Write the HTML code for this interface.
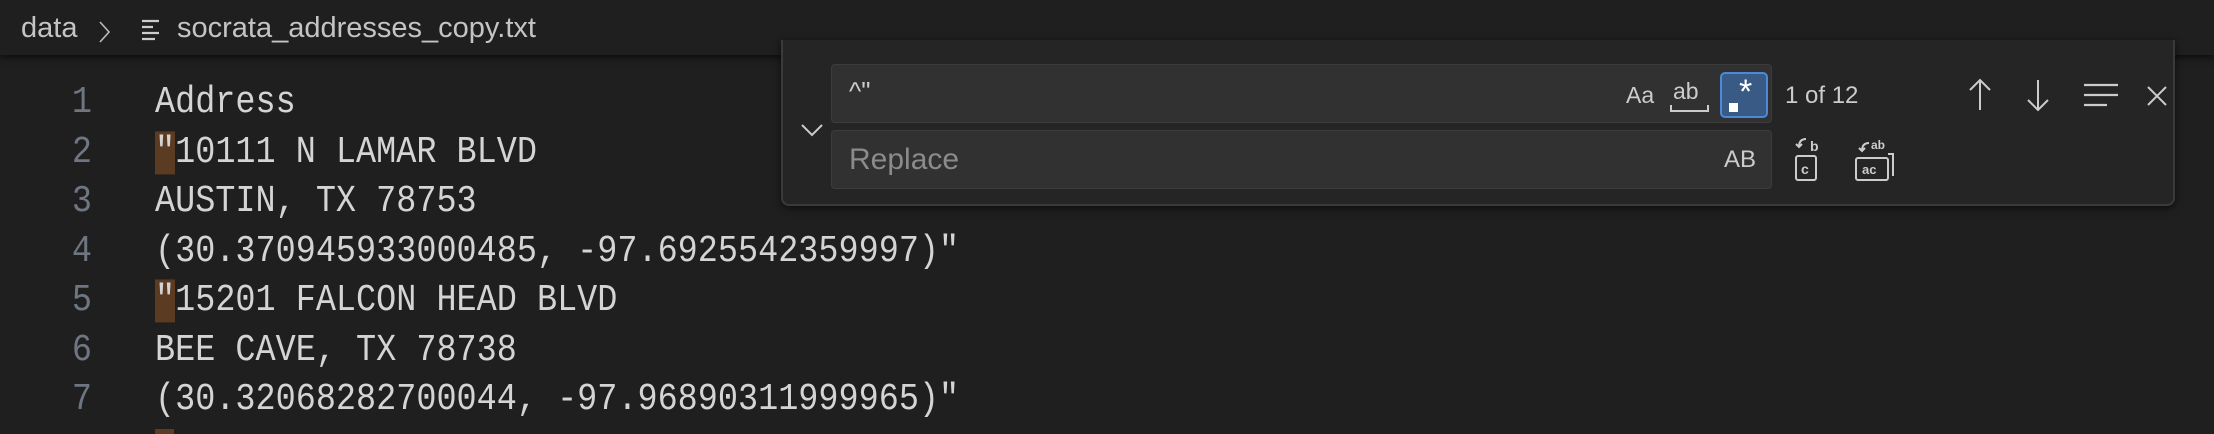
<!DOCTYPE html>
<html style="width:2214px;height:434px;overflow:hidden"><head><meta charset="utf-8"><style>
*{margin:0;padding:0;box-sizing:border-box}
body{width:2214px;height:434px;background:#1f1f1f;overflow:hidden;position:relative;font-family:"Liberation Sans",sans-serif;color:#cccccc}
.bc{position:absolute;left:0;top:0;width:2214px;height:55px;background:#1f1f1f;box-shadow:0 3px 6px rgba(0,0,0,.55);z-index:2}
.bc span{position:absolute;top:14px;font-size:29px;line-height:29px;color:#c4c4c4}
.code{position:absolute;left:0;top:79px;font-family:"Liberation Mono",monospace;font-size:33.5px}
.num{position:absolute;left:60px;width:32px;text-align:right;color:#6e7681;height:49.5px;line-height:49.5px;transform:scaleY(1.13)}
.t{position:absolute;left:155px;color:#d4d4d4;white-space:pre;height:49.5px;line-height:49.5px;transform:scaleY(1.13);transform-origin:0 50%}
.hl{background:#5c3b23}
.fw{position:absolute;left:781px;top:40px;width:1394px;height:166px;background:#252526;border:2px solid #3a3a3a;border-top:none;border-radius:0 0 8px 8px;box-shadow:0 2px 8px rgba(0,0,0,.6);z-index:3}
.in{position:absolute;background:#313131;border:1px solid #3c3c3c;border-radius:4px}
.ui{position:absolute;font-size:24px;color:#cccccc}
</style></head><body>
<div class="bc">
<span style="left:21px">data</span>
<svg style="position:absolute;left:98px;top:20px" width="14" height="24"><path d="M2 2 L11 12 L2 22" stroke="#bbb" stroke-width="1.6" fill="none"/></svg>
<svg style="position:absolute;left:141px;top:19px" width="20" height="22"><path d="M1 2H18M1 8H12M1 14H18M1 20H14" stroke="#ccc" stroke-width="2.2"/></svg>
<span style="left:177px">socrata_addresses_copy.txt</span>
</div>
<div class="code">
<div class="num" style="top:0">1</div><div class="t" style="top:0">Address</div>
<div class="num" style="top:49.5px">2</div><div class="t" style="top:49.5px"><span class="hl">"</span>10111 N LAMAR BLVD</div>
<div class="num" style="top:99px">3</div><div class="t" style="top:99px">AUSTIN, TX 78753</div>
<div class="num" style="top:148.5px">4</div><div class="t" style="top:148.5px">(30.370945933000485, -97.6925542359997)"</div>
<div class="num" style="top:198px">5</div><div class="t" style="top:198px"><span class="hl">"</span>15201 FALCON HEAD BLVD</div>
<div class="num" style="top:247.5px">6</div><div class="t" style="top:247.5px">BEE CAVE, TX 78738</div>
<div class="num" style="top:297px">7</div><div class="t" style="top:297px">(30.32068282700044, -97.96890311999965)"</div>
<div style="position:absolute;left:155px;top:350px;width:19px;height:20px;background:#5c3b23"></div>
</div>
<div class="fw">
<svg style="position:absolute;left:17px;top:82px" width="24" height="16"><path d="M2 3 L12 13 L22 3" stroke="#ccc" stroke-width="2" fill="none"/></svg>
<div class="in" style="left:48px;top:24px;width:941px;height:59px"></div>
<div class="ui" style="left:66px;top:36px;font-size:26px">^"</div>
<div class="ui" style="left:843px;top:42px;font-size:23px">Aa</div>
<div class="ui" style="left:890px;top:38px;font-size:23px">ab</div>
<svg style="position:absolute;left:887px;top:64px" width="40" height="10"><path d="M1 1V7H38V1" stroke="#ccc" stroke-width="2" fill="none"/></svg>
<div style="position:absolute;left:937px;top:32px;width:48px;height:46px;background:#385a85;border:2px solid #4a8ad6;border-radius:5px"></div>
<div style="position:absolute;left:946px;top:63px;width:9px;height:9px;background:#fff"></div>
<div class="ui" style="left:956px;top:33px;font-size:34px;color:#fff">*</div>
<div class="ui" style="left:1002px;top:42px">1 of 12</div>
<svg style="position:absolute;left:1185px;top:38px" width="24" height="34"><path d="M12 2V32M2 12L12 2L22 12" stroke="#ccc" stroke-width="2" fill="none"/></svg>
<svg style="position:absolute;left:1243px;top:38px" width="24" height="34"><path d="M12 2V32M2 22L12 32L22 22" stroke="#ccc" stroke-width="2" fill="none"/></svg>
<svg style="position:absolute;left:1300px;top:42px" width="36" height="26"><path d="M1 3H35M1 13H35M1 23H24" stroke="#ccc" stroke-width="2.2"/></svg>
<svg style="position:absolute;left:1362px;top:44px" width="24" height="24"><path d="M3 3L21 21M21 3L3 21" stroke="#ccc" stroke-width="2"/></svg>
<div class="in" style="left:48px;top:90px;width:941px;height:59px"></div>
<div class="ui" style="left:66px;top:103px;font-size:30px;color:#8b8b8b">Replace</div>
<div class="ui" style="left:941px;top:106px;font-size:24px">AB</div>
<svg style="position:absolute;left:1010px;top:96px" width="40" height="48"><path d="M13 3Q6 3 6 11M3 8L6 11L9 8" stroke="#ccc" stroke-width="2" fill="none"/><text x="17" y="15" font-size="14" font-family="Liberation Sans" fill="#ccc" font-weight="bold">b</text><rect x="3" y="20" width="20" height="24" rx="2" stroke="#ccc" stroke-width="2" fill="none"/><text x="8" y="38" font-size="14" font-family="Liberation Sans" fill="#ccc" font-weight="bold">c</text></svg>
<svg style="position:absolute;left:1070px;top:96px" width="44" height="48"><path d="M16 7Q9 7 9 15M6 12L9 15L12 12" stroke="#ccc" stroke-width="2" fill="none"/><text x="18" y="13" font-size="12" font-family="Liberation Sans" fill="#ccc" font-weight="bold">ab</text><path d="M35 18H40V40" stroke="#ccc" stroke-width="2" fill="none"/><rect x="3" y="22" width="32" height="22" rx="2" stroke="#ccc" stroke-width="2" fill="none"/><text x="9" y="38" font-size="13" font-family="Liberation Sans" fill="#ccc" font-weight="bold">ac</text></svg>
</div>
</body></html>
